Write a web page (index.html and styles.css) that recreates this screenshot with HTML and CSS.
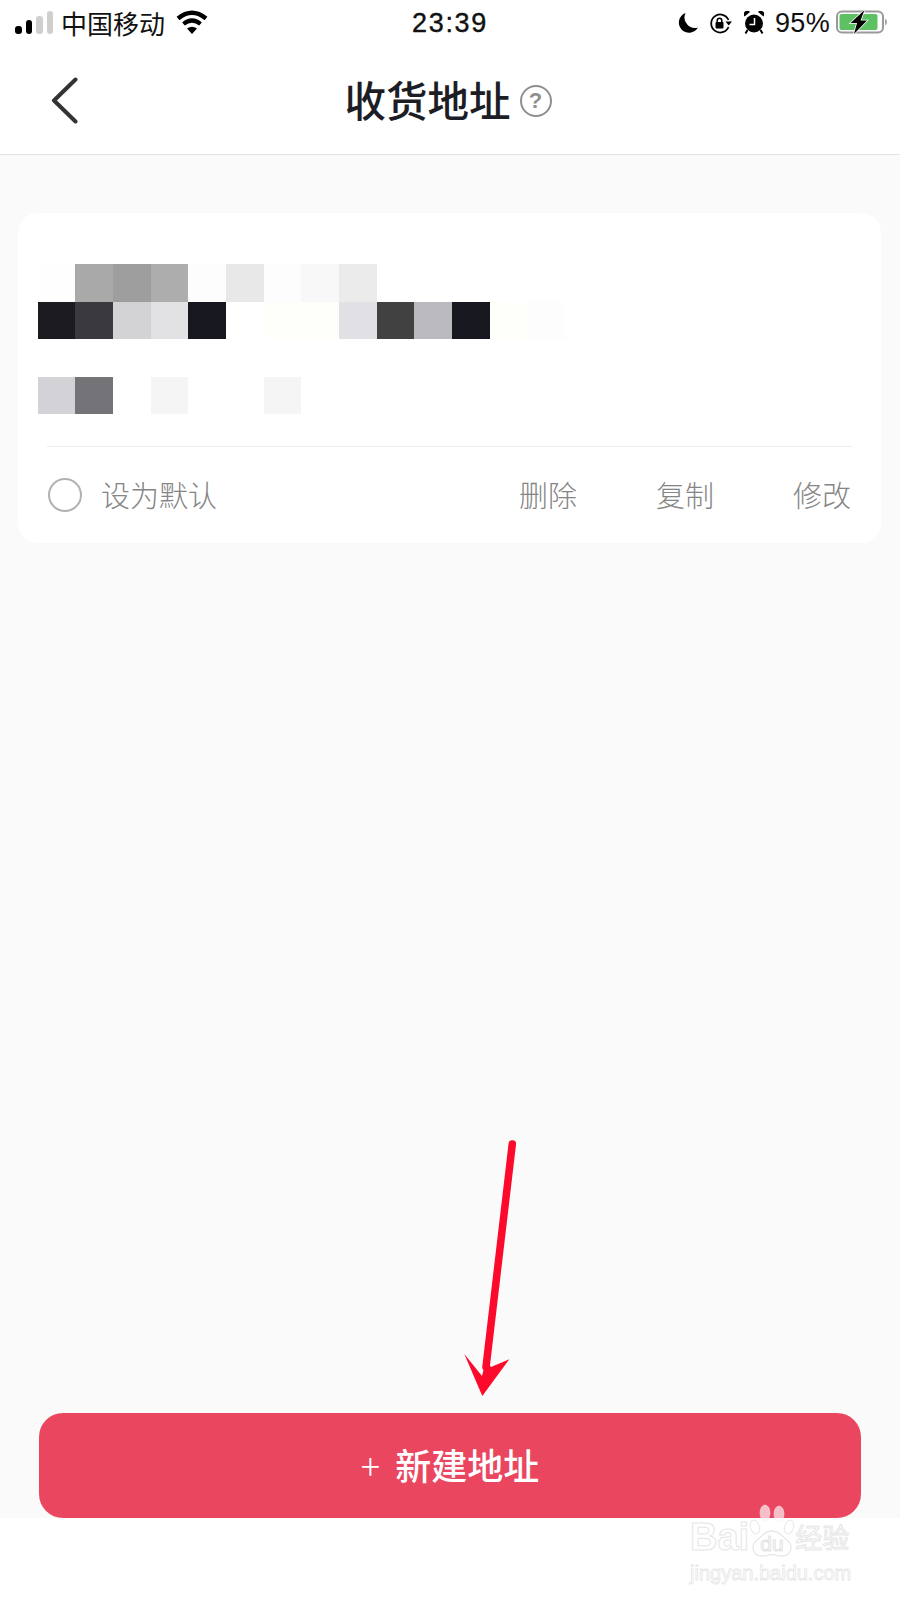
FILE: index.html
```html
<!DOCTYPE html>
<html lang="zh-CN">
<head>
    <meta charset="UTF-8">
    <meta name="viewport" content="width=device-width, initial-scale=1.0">
    <title>收货地址</title>
    <link rel="stylesheet" href="styles.css">
</head>
<body>
    <div class="page">
        <div class="status-bar">
            <div class="status-left">
                <div class="signal">
                    <span class="bar bar-1"></span>
                    <span class="bar bar-2"></span>
                    <span class="bar bar-3"></span>
                    <span class="bar bar-4"></span>
                </div>
                <span class="carrier">中国移动</span>
                <svg class="wifi" width="32" height="24" viewBox="0 0 32 24">
                    <path d="M2 8.500Q16 -3 30 8.500" fill="none" stroke="#000" stroke-width="4.400"/>
                    <path d="M7.500 14Q16 7 24.500 14" fill="none" stroke="#000" stroke-width="4.200"/>
                    <path d="M11 18.500Q16 15 21 18.500L16 24Z" fill="#000"/>
                </svg>
            </div>
            <div class="clock">23:39</div>
            <div class="status-right">
                <svg class="moon" width="20" height="20" viewBox="0 0 20 20">
                    <path d="M7.500 0A10.200 10.200 0 1 0 20 14.500A10.500 10.500 0 0 1 7.500 0Z" fill="#000"/>
                </svg>
                <svg class="rotate-lock" width="23" height="21" viewBox="0 0 23 21">
                    <path d="M19.500 7A9 9 0 1 0 19.500 14" fill="none" stroke="#000" stroke-width="1.800"/>
                    <path d="M16.500 8.500H23L19.700 12.500Z" fill="#000"/>
                    <rect x="6.500" y="9" width="8" height="6.500" rx="1" fill="#000"/>
                    <path d="M8.200 9.500V7.500A2.300 2.300 0 0 1 12.800 7.500V9.500" fill="none" stroke="#000" stroke-width="1.500"/>
                </svg>
                <svg class="alarm" width="20" height="23" viewBox="0 0 20 23">
                    <circle cx="10" cy="12.500" r="9" fill="#000"/>
                    <path d="M0.500 5.500A3.500 3.500 0 0 1 6 1ZM19.500 5.500A3.500 3.500 0 0 0 14 1Z" fill="#000"/>
                    <path d="M3.500 19L1.500 22.500M16.500 19L18.500 22.500" stroke="#000" stroke-width="2"/>
                    <path d="M10.500 7V13.500H5.500" fill="none" stroke="#fff" stroke-width="1.500"/>
                </svg>
                <span class="battery-text">95%</span>
                <svg class="battery" width="52" height="26" viewBox="0 0 52 26">
                    <rect x="1" y="2.500" width="46" height="21" rx="5" fill="#fff" stroke="#9a9a9a" stroke-width="2"/>
                    <rect x="3.500" y="5" width="38" height="16" rx="2" fill="#5cc162"/>
                    <path d="M49 9.500A4 4 0 0 1 49 16.500Z" fill="#a5a5a5"/>
                    <path d="M28.500 1L14.500 14H21L18 25L31 11.500H24.500Z" fill="#000" stroke="#fff" stroke-width="1.500" paint-order="stroke"/>
                </svg>
            </div>
        </div>

        <div class="nav-bar">
            <svg class="back" width="27" height="47" viewBox="0 0 27 47">
                <path d="M24.500 2.500L3 23.500L24.500 44.500" fill="none" stroke="#333336" stroke-width="4" stroke-linecap="round" stroke-linejoin="round"/>
            </svg>
            <div class="title-group">
                <span class="title">收货地址</span>
                <span class="help">?</span>
            </div>
        </div>

        <div class="content">
            <div class="card">
                <div class="mosaic">
                    <div class="mosaic-row">
                        <span class="cell c-fe"></span>
                        <span class="cell c-a9"></span>
                        <span class="cell c-9e"></span>
                        <span class="cell c-ad"></span>
                        <span class="cell c-fd"></span>
                        <span class="cell c-e8"></span>
                        <span class="cell c-fd"></span>
                        <span class="cell c-f8"></span>
                        <span class="cell c-eb"></span>
                    </div>
                    <div class="mosaic-row">
                        <span class="cell c-1b"></span>
                        <span class="cell c-3a"></span>
                        <span class="cell c-d3"></span>
                        <span class="cell c-e2"></span>
                        <span class="cell c-17"></span>
                        <span class="cell"></span>
                        <span class="cell c-fb"></span>
                        <span class="cell c-fb"></span>
                        <span class="cell c-e1"></span>
                        <span class="cell c-41"></span>
                        <span class="cell c-ba"></span>
                        <span class="cell c-17"></span>
                        <span class="cell c-fb"></span>
                        <span class="cell c-fd"></span>
                    </div>
                    <div class="mosaic-row mosaic-last">
                        <span class="cell c-d2"></span>
                        <span class="cell c-74"></span>
                        <span class="cell"></span>
                        <span class="cell c-f5"></span>
                        <span class="cell"></span>
                        <span class="cell"></span>
                        <span class="cell c-f5"></span>
                    </div>
                </div>
                <div class="divider"></div>
                <div class="actions">
                    <div class="default-option">
                        <span class="radio"></span>
                        <span class="default-label">设为默认</span>
                    </div>
                    <div class="links">
                        <span>删除</span>
                        <span>复制</span>
                        <span>修改</span>
                    </div>
                </div>
            </div>

            <div class="add-button">
                <span class="plus">+</span>
                <span>新建地址</span>
            </div>
        </div>

        <div class="footer"></div>

        <!-- annotation arrow -->
        <svg class="arrow" width="60" height="265" viewBox="0 0 60 265">
            <path d="M52.300 9L26 232" fill="none" stroke="#fb0a2b" stroke-width="7.500" stroke-linecap="round"/>
            <path d="M22 241L26 225L31 232L49.300 224.300L22.300 261L4.300 219Z" fill="#fb0a2b"/>
        </svg>

        <!-- watermark -->
        <div class="watermark">
            <div class="wm-top">
                <span class="wm-bai">Bai</span>
                <svg class="wm-paw" width="46" height="56" viewBox="0 0 46 56">
                    <ellipse cx="16" cy="10" rx="5" ry="8" fill="#fff" fill-opacity="0.65" stroke="#eee" stroke-opacity="0.5"/>
                    <ellipse cx="30" cy="11" rx="5" ry="8" fill="#fff" fill-opacity="0.65" stroke="#eee" stroke-opacity="0.5"/>
                    <ellipse cx="6" cy="24" rx="4.500" ry="7" fill="#fff" stroke="#e8e8e8" transform="rotate(-15 6 24)"/>
                    <ellipse cx="40" cy="24" rx="4.500" ry="7" fill="#fff" stroke="#e8e8e8" transform="rotate(15 40 24)"/>
                    <path d="M23 28C30 28 33 33 38 37C45 43 42 53 33 53C28 53 26 51.500 23 51.500C20 51.500 18 53 13 53C4 53 1 43 8 37C13 33 16 28 23 28Z" fill="#fff" stroke="#e8e8e8" stroke-width="1.300"/>
                    <text class="wm-du" x="23" y="48" text-anchor="middle">du</text>
                </svg>
                <span class="wm-jy">经验</span>
            </div>
            <div class="wm-url">jingyan.baidu.com</div>
        </div>
    </div>
</body>
</html>
```

FILE: styles.css
```css
* {
    box-sizing: border-box;
}

body {
    margin: 0;
    background-color: #fff;
    font-family: "Noto Sans CJK SC", "Liberation Sans", sans-serif;
}

.page {
    position: relative;
    display: flex;
    flex-direction: column;
    width: 900px;
    height: 1600px;
    overflow: hidden;
}

/* status bar */
.status-bar {
    display: grid;
    grid-template-columns: 1fr auto 1fr;
    align-items: center;
    height: 46px;
    color: #111;
}

.status-left {
    display: flex;
    align-items: center;
    padding-left: 15px;
}

.signal {
    display: flex;
    align-items: flex-end;
    gap: 4px;
    height: 23px;
    margin-top: -1px;
}

.bar {
    width: 6.500px;
    border-radius: 3px;
    background-color: #cfcfcf;
}

.bar-1 {
    height: 8px;
    background-color: #000;
}

.bar-2 {
    height: 14px;
    background-color: #000;
}

.bar-3 {
    height: 18px;
}

.bar-4 {
    height: 23px;
}

.carrier {
    margin-left: 8px;
    font-size: 26px;
    line-height: 1;
}

.wifi {
    margin-left: 11px;
    margin-top: -2px;
}

.clock {
    font-family: "Liberation Sans", sans-serif;
    font-size: 27px;
    font-weight: 400;
    letter-spacing: 1.700px;
    -webkit-text-stroke: 0.4px #111;
}

.status-right {
    display: flex;
    align-items: center;
    justify-content: flex-end;
    padding-right: 12px;
}

.moon {
    margin-right: 11px;
}

.rotate-lock {
    margin-right: 12px;
}

.alarm {
    margin-right: 11px;
    margin-top: -2px;
}

.battery-text {
    font-family: "Liberation Sans", sans-serif;
    font-size: 27px;
    letter-spacing: 0.300px;
    margin-right: 6px;
}

.battery {
    margin-top: -2px;
}

/* nav */
.nav-bar {
    position: relative;
    display: flex;
    justify-content: center;
    align-items: center;
    height: 109px;
    border-bottom: 1px solid #e2e2e2;
}

.back {
    position: absolute;
    left: 51px;
    top: 31px;
}

.title-group {
    display: flex;
    align-items: center;
    gap: 9px;
    margin-right: 4px;
}

.title {
    font-size: 41.500px;
    font-weight: 500;
    line-height: 1;
    color: #1d1d26;
}

.help {
    display: flex;
    justify-content: center;
    align-items: center;
    width: 32px;
    height: 32px;
    margin-top: 2px;
    border: 2.500px solid #8f8f8f;
    border-radius: 50%;
    font-family: "Liberation Sans", sans-serif;
    font-size: 22px;
    font-weight: bold;
    color: #8f8f8f;
}

/* content */
.content {
    display: flex;
    flex-direction: column;
    flex: 1;
    background-color: #fafafb;
    padding-top: 58px;
}

.card {
    width: 863px;
    height: 330px;
    margin-left: 18px;
    padding-top: 51px;
    background-color: #fff;
    border-radius: 20px;
}

.mosaic {
    margin-left: 19.500px;
}

.mosaic-row {
    display: flex;
    height: 37.500px;
}

.mosaic-last {
    margin-top: 37.500px;
}

.cell {
    width: 37.700px;
    height: 100%;
}

.c-fe { background-color: #fefefe; }
.c-fd { background-color: #fdfdfd; }
.c-fb { background-color: #fefefa; }
.c-f8 { background-color: #f8f8f8; }
.c-f5 { background-color: #f5f5f5; }
.c-eb { background-color: #ebebeb; }
.c-e8 { background-color: #e8e8e8; }
.c-e2 { background-color: #e2e2e4; }
.c-e1 { background-color: #e1e1e5; }
.c-d3 { background-color: #d3d3d5; }
.c-d2 { background-color: #d2d2d7; }
.c-ba { background-color: #bab9be; }
.c-ad { background-color: #adadad; }
.c-a9 { background-color: #a9a9a9; }
.c-9e { background-color: #9e9e9e; }
.c-74 { background-color: #747478; }
.c-41 { background-color: #414141; }
.c-3a { background-color: #3a3a3e; }
.c-1b { background-color: #1b1b20; }
.c-17 { background-color: #17171f; }

.divider {
    height: 1px;
    margin: 32px 29px 0 29px;
    background-color: #ececec;
}

.actions {
    display: flex;
    justify-content: space-between;
    align-items: center;
    height: 96px;
    padding: 0 30px 0 30px;
    color: #858585;
}

.default-option {
    display: flex;
    align-items: center;
    gap: 19px;
}

.radio {
    width: 34px;
    height: 34px;
    border: 2px solid #b2b2b2;
    border-radius: 50%;
}

.default-label {
    font-size: 29px;
    font-weight: 300;
    line-height: 1;
    margin-top: -1px;
}

.links {
    display: flex;
    gap: 79px;
    font-size: 29px;
    font-weight: 300;
    line-height: 1;
    margin-top: -1px;
}

.add-button {
    display: flex;
    justify-content: center;
    align-items: center;
    gap: 15px;
    height: 105px;
    padding-bottom: 3px;
    margin: auto 39px 0 39px;
    background-color: #ea465f;
    border-radius: 24px;
    color: #fff;
    font-size: 36px;
    font-weight: 500;
}

.plus {
    font-weight: 300;
}

.footer {
    height: 82px;
    background-color: #fff;
}

/* things lying over the page */
.arrow {
    position: absolute;
    left: 460px;
    top: 1135px;
}

.watermark {
    position: absolute;
    left: 690px;
    top: 1503px;
    width: 165px;
}

.wm-top {
    display: flex;
    align-items: flex-end;
}

.wm-bai {
    font-family: "Liberation Sans", sans-serif;
    font-size: 38px;
    font-weight: bold;
    line-height: 44px;
    color: transparent;
    -webkit-text-stroke: 1px #e6e6e6;
}

.wm-paw {
    display: block;
    overflow: visible;
}

.wm-du {
    font-family: "Liberation Sans", sans-serif;
    font-size: 21px;
    fill: none;
    stroke: #e2e2e2;
    stroke-width: 1;
}

.wm-jy {
    font-size: 27px;
    line-height: 44px;
    color: transparent;
    -webkit-text-stroke: 1px #e6e6e6;
}

.wm-url {
    margin-top: 2px;
    font-family: "Liberation Sans", sans-serif;
    font-size: 20px;
    line-height: 24px;
    white-space: nowrap;
    color: transparent;
    -webkit-text-stroke: 0.8px #e6e6e6;
}
```
